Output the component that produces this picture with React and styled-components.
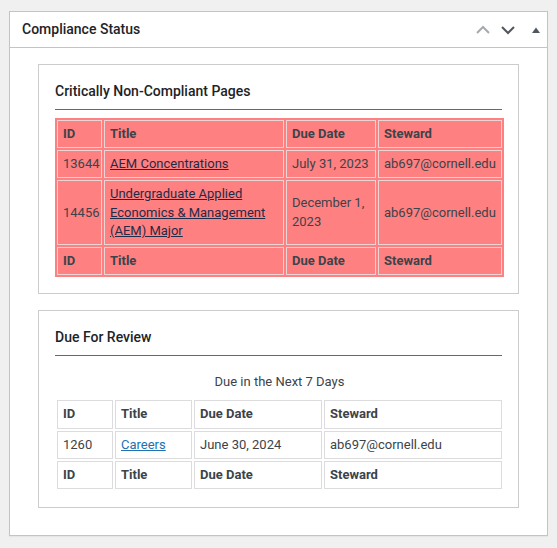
import React from 'react';
import styled, { createGlobalStyle } from 'styled-components';

const GlobalStyle = createGlobalStyle`
  html, body {
    margin: 0;
    padding: 0;
    background: #f0f0f1;
  }
  body {
    font-family: Roboto, "Noto Sans", sans-serif;
    font-size: 13px;
    line-height: 1.4;
    color: #3c434a;
  }
`;

const Page = styled.div`
  padding: 11px 9px 12px 9px;
`;

const Postbox = styled.div`
  background: #fff;
  border: 1px solid #c3c4c7;
  box-shadow: 0 1px 1px rgba(0, 0, 0, 0.04);
`;

const PostboxHeader = styled.div`
  display: flex;
  align-items: center;
  justify-content: space-between;
  height: 35px;
  border-bottom: 1px solid #c3c4c7;
  padding: 1px 0 0 12px;
  box-sizing: border-box;
  height: 36px;
`;

const PostboxTitle = styled.h2`
  margin: 0;
  font-size: 14px;
  font-weight: 500;
  color: #1d2327;
`;

const HandleActions = styled.div`
  display: flex;
  align-items: center;
  height: 100%;
`;

const HandleButton = styled.span`
  display: flex;
  align-items: center;
  justify-content: center;
  width: ${(p) => p.$w || 25}px;
  margin-left: ${(p) => p.$ml || 0}px;
  height: 100%;
  color: ${(p) => p.$color};
`;

const Inside = styled.div`
  display: flex;
  flex-direction: column;
  gap: 16px;
  padding: 16px 28px 27px 28px;
`;

const Section = styled.div`
  border: 1px solid #ccc;
  padding: 16px;
`;

const SectionTitle = styled.h3`
  margin: 0 0 8px 0;
  padding-bottom: 8px;
  border-bottom: 1px solid #646970;
  font-size: 14px;
  line-height: 20px;
  font-weight: 500;
  color: #1d2327;
`;

const Table = styled.table`
  width: 100%;
  table-layout: fixed;
  border-collapse: separate;
  border-spacing: 2px;
  background: ${(p) => (p.$critical ? '#ff8080' : 'transparent')};
`;

const Caption = styled.caption`
  padding: 9px 0 7px;
  text-align: center;
  color: #3c434a;
`;

const Col = styled.col`
  width: ${(p) => p.$w}px;
`;

const Th = styled.th`
  text-align: left;
  font-weight: 700;
  padding: 4px 5px;
  border: 1px solid ${(p) => (p.$critical ? '#e8d4d4' : '#dcdcde')};
  color: #3c434a;
  vertical-align: middle;
`;

const Td = styled.td`
  padding: 4px 5px;
  border: 1px solid ${(p) => (p.$critical ? '#e8d4d4' : '#dcdcde')};
  color: #3c434a;
  vertical-align: middle;
  white-space: ${(p) => (p.$nowrap ? 'nowrap' : 'normal')};
`;

const PageLink = styled.a`
  color: ${(p) => (p.$critical ? '#1f2b47' : '#2271b1')};
  text-decoration: underline;
`;

const ChevronUp = () => (
  <svg width="14" height="10" viewBox="0 0 14 10">
    <path d="M1 8 L7 2 L13 8" fill="none" stroke="currentColor" strokeWidth="2" />
  </svg>
);

const ChevronDown = () => (
  <svg width="14" height="10" viewBox="0 0 14 10">
    <path d="M1 2 L7 8 L13 2" fill="none" stroke="currentColor" strokeWidth="2" />
  </svg>
);

const TriangleUp = () => (
  <svg width="10" height="8" viewBox="0 0 10 8">
    <path d="M1 7 L5 1.5 L9 7 Z" fill="currentColor" />
  </svg>
);

const columnsCritical = [45, 180, 90, 124];
const columnsReview = [56, 77, 128, 178];

const criticalRows = [
  { id: '13644', title: 'AEM Concentrations', due: 'July 31, 2023', steward: 'ab697@cornell.edu' },
  {
    id: '14456',
    title: 'Undergraduate Applied Economics & Management (AEM) Major',
    due: 'December 1, 2023',
    steward: 'ab697@cornell.edu',
  },
];

const reviewRows = [
  { id: '1260', title: 'Careers', due: 'June 30, 2024', steward: 'ab697@cornell.edu' },
];

const HeadRow = ({ critical }) => (
  <tr>
    <Th $critical={critical}>ID</Th>
    <Th $critical={critical}>Title</Th>
    <Th $critical={critical}>Due Date</Th>
    <Th $critical={critical}>Steward</Th>
  </tr>
);

function PagesTable({ rows, columns, critical, caption }) {
  return (
    <Table $critical={critical}>
      {caption && <Caption>{caption}</Caption>}
      <colgroup>
        {columns.map((w, i) => (
          <Col key={i} $w={w} />
        ))}
      </colgroup>
      <thead>
        <HeadRow critical={critical} />
      </thead>
      <tbody>
        {rows.map((row) => (
          <tr key={row.id}>
            <Td $critical={critical}>{row.id}</Td>
            <Td $critical={critical}>
              <PageLink href="#" $critical={critical}>{row.title}</PageLink>
            </Td>
            <Td $critical={critical}>{row.due}</Td>
            <Td $critical={critical} $nowrap>{row.steward}</Td>
          </tr>
        ))}
      </tbody>
      <tfoot>
        <HeadRow critical={critical} />
      </tfoot>
    </Table>
  );
}

export default function App() {
  return (
    <Page>
      <GlobalStyle />
      <Postbox>
        <PostboxHeader>
          <PostboxTitle>Compliance Status</PostboxTitle>
          <HandleActions>
            <HandleButton $color="#a7aaad"><ChevronUp /></HandleButton>
            <HandleButton $color="#50575e"><ChevronDown /></HandleButton>
            <HandleButton $color="#50575e" $w={22} $ml={5}><TriangleUp /></HandleButton>
          </HandleActions>
        </PostboxHeader>
        <Inside>
          <Section>
            <SectionTitle>Critically Non-Compliant Pages</SectionTitle>
            <PagesTable rows={criticalRows} columns={columnsCritical} critical />
          </Section>
          <Section>
            <SectionTitle>Due For Review</SectionTitle>
            <PagesTable
              rows={reviewRows}
              columns={columnsReview}
              caption="Due in the Next 7 Days"
            />
          </Section>
        </Inside>
      </Postbox>
    </Page>
  );
}
